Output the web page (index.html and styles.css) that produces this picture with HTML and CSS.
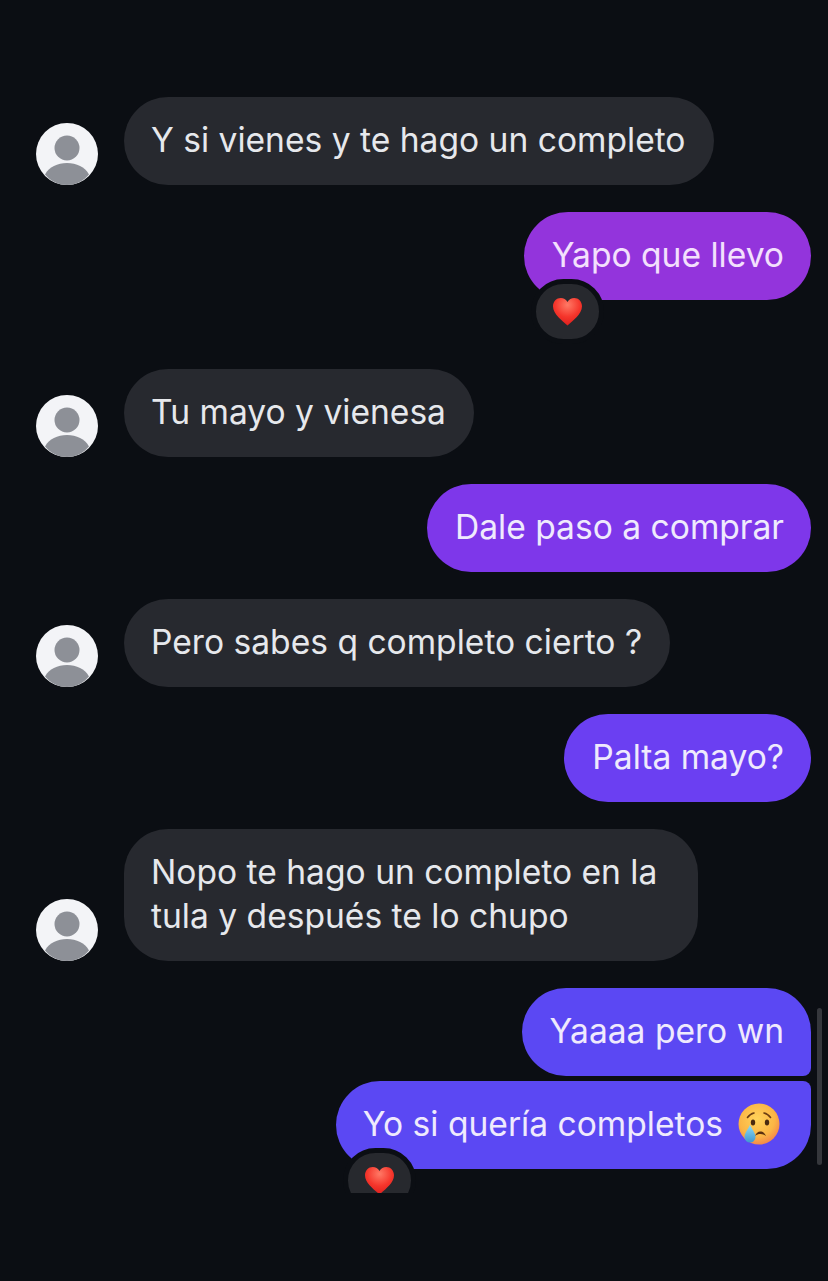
FILE: index.html
```html
<!DOCTYPE html>
<html>

<head>
  <title>Chat</title>
  <link rel="stylesheet" href="styles.css">
</head>

<body>
  <svg class="defs" width="0" height="0">
    <defs>
      <radialGradient id="heartFill" cx="50%" cy="25%" r="80%">
        <stop offset="0%" stop-color="#ff7a66" />
        <stop offset="55%" stop-color="#f5352b" />
        <stop offset="100%" stop-color="#d91c1c" />
      </radialGradient>
      <symbol id="heart" viewBox="0 0 32 30">
        <path fill="url(#heartFill)" d="M16 29.500C11 24.500 1 18 1 9.500 1 4.500 4.700 1 9 1c3 0 5.500 1.500 7 4.200C17.500 2.500 20 1 23 1c4.300 0 8 3.500 8 8.500C31 18 21 24.500 16 29.500z" />
      </symbol>
      <symbol id="person" viewBox="0 0 62 62">
        <circle cx="31" cy="31" r="31" fill="#f3f4f7" />
        <circle cx="31" cy="25" r="12.500" fill="#8d9097" />
        <path d="M9 51.500c4-7.500 12.500-11.500 22-11.500s18 4 22 11.500C47.500 58 39.500 62 31 62S14.500 58 9 51.500z" fill="#8d9097" />
      </symbol>
    </defs>
  </svg>

  <main class="chat">
    <div class="row them">
      <svg class="avatar"><use href="#person" /></svg>
      <div class="bubble dark">Y si vienes y te hago un completo</div>
    </div>

    <div class="row me has-reaction">
      <div class="bubble violet-1">
        Yapo que llevo
        <span class="reaction"><svg class="heart"><use href="#heart" /></svg></span>
      </div>
    </div>

    <div class="row them">
      <svg class="avatar"><use href="#person" /></svg>
      <div class="bubble dark">Tu mayo y vienesa</div>
    </div>

    <div class="row me">
      <div class="bubble violet-2">Dale paso a comprar</div>
    </div>

    <div class="row them">
      <svg class="avatar"><use href="#person" /></svg>
      <div class="bubble dark">Pero sabes q completo cierto ?</div>
    </div>

    <div class="row me">
      <div class="bubble violet-3">Palta mayo?</div>
    </div>

    <div class="row them">
      <svg class="avatar"><use href="#person" /></svg>
      <div class="bubble dark wide">Nopo te hago un completo en la tula y después te lo chupo</div>
    </div>

    <div class="row me grouped">
      <div class="bubble violet-4 first">Yaaaa pero wn</div>
    </div>

    <div class="row me">
      <div class="bubble violet-4 last">
        Yo si quería completos
        <svg class="emoji" viewBox="0 0 42 42">
          <defs>
            <radialGradient id="faceFill" cx="45%" cy="38%" r="62%">
              <stop offset="0%" stop-color="#ffd35a" />
              <stop offset="70%" stop-color="#fbb545" />
              <stop offset="100%" stop-color="#f48a4a" />
            </radialGradient>
            <linearGradient id="tearFill" x1="0" y1="0" x2="0" y2="1">
              <stop offset="0%" stop-color="#8fdcf5" />
              <stop offset="100%" stop-color="#3f97d0" />
            </linearGradient>
          </defs>
          <circle cx="21" cy="21" r="20.500" fill="url(#faceFill)" />
          <path d="M9.500 14.500c1.800-2.600 4-4 6.500-4.500M32.500 14.500c-1.800-2.600-4-4-6.500-4.500" fill="none" stroke="#6b3d12" stroke-width="1.600" stroke-linecap="round" />
          <ellipse cx="15" cy="19.500" rx="2.200" ry="3" fill="#4a2a10" />
          <ellipse cx="29" cy="19.500" rx="2.200" ry="3" fill="#4a2a10" />
          <path d="M17 33c1.200-3 3-4.500 5.300-4.500 2.500 0 4.400 1.500 5.700 4.500-1.800-1.300-3.600-1.900-5.600-1.900-1.900 0-3.700.6-5.400 1.900z" fill="#5a3010" />
          <path d="M12 22c2.600 4.800 5.500 8.500 5.500 12a5.500 5.500 0 0 1-11 0c0-3.500 2.900-7.200 5.500-12z" fill="url(#tearFill)" />
        </svg>
        <span class="reaction"><svg class="heart"><use href="#heart" /></svg></span>
      </div>
    </div>

    <div class="scrollbar"></div>
  </main>
</body>

</html>
```

FILE: styles.css
```css
* {
  box-sizing: border-box;
}

body {
  margin: 0;
  height: 1281px;
  overflow: hidden;
  background-color: #0b0e13;
  font-family: Inter, "Liberation Sans", sans-serif;
}

.defs {
  display: block;
  height: 0;
}

.chat {
  position: relative;
  height: 1193px;
  overflow: hidden;
  padding-top: 97px;
  display: flex;
  flex-direction: column;
  gap: 27px;
}

.row {
  display: flex;
  align-items: flex-end;
}

.them {
  padding-left: 36px;
  gap: 26px;
}

.me {
  justify-content: flex-end;
  padding-right: 17px;
}

.has-reaction {
  margin-bottom: 42px;
}

.grouped {
  margin-bottom: -22px;
}

.avatar {
  width: 62px;
  height: 62px;
  flex-shrink: 0;
}

.bubble {
  position: relative;
  padding: 21px 27px 23px 28px;
  border-radius: 44px;
  font-size: 33.6px;
  line-height: 44px;
  color: #efeafd;
}

.dark {
  padding-left: 27px;
  padding-right: 28px;
  background-color: #27292f;
  color: #e6e8ec;
}

.wide {
  max-width: 574px;
}

.violet-1 {
  background-color: #9334dc;
  color: #f3e0fd;
}

.violet-2 {
  background-color: #7e37ea;
}

.violet-3 {
  background-color: #6b3ff2;
}

.violet-4 {
  background-color: #5b48f3;
}

.first {
  border-bottom-right-radius: 8px;
}

.last {
  border-top-right-radius: 8px;
  display: flex;
  align-items: center;
  gap: 15px;
  padding-left: 27px;
  padding-right: 31px;
}

.reaction {
  position: absolute;
  left: 7px;
  top: 67px;
  width: 73px;
  height: 65px;
  border: 5px solid #0b0e13;
  border-radius: 33px;
  background-color: #27292e;
  display: flex;
  align-items: center;
  justify-content: center;
}

.heart {
  width: 31px;
  height: 29px;
}

.emoji {
  width: 42px;
  height: 42px;
  flex-shrink: 0;
}

.scrollbar {
  position: absolute;
  right: 6px;
  top: 1008px;
  width: 5px;
  height: 157px;
  border-radius: 3px;
  background-color: #35373c;
}
```
